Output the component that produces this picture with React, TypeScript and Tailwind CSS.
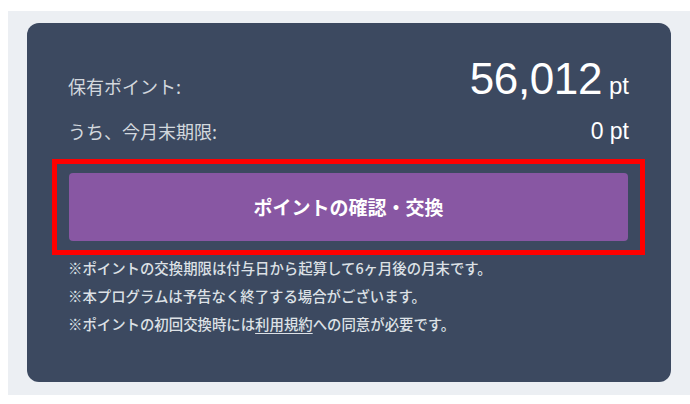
export default function App() {
  const notes = [
    "※ポイントの交換期限は付与日から起算して6ヶ月後の月末です。",
    "※本プログラムは予告なく終了する場合がございます。",
  ];

  return (
    <div className="w-[690px] h-[404px] bg-white pt-[11px] pl-[8px] font-['Noto_Sans_CJK_JP',sans-serif]">
      <div className="w-[682px] h-[384px] bg-[#eceff3] pt-[12px] pl-[19px]">
        <div className="w-[644px] h-[359px] rounded-[12px] bg-[#3c4960] pl-[41px] pr-[42px] pt-[32px]">
          {/* Points */}
          <div className="flex items-baseline justify-between">
            <span className="text-[18px] text-[#d3d8de]">保有ポイント:</span>
            <span className="font-['Liberation_Sans',sans-serif] text-white">
              <span className="text-[44px] leading-[48px] tracking-[-0.4px]">56,012</span>
              <span className="ml-[7px] text-[24px]">pt</span>
            </span>
          </div>
          <div className="mt-[14px] flex items-baseline justify-between">
            <span className="text-[18px] text-[#d3d8de]">うち、今月末期限:</span>
            <span className="font-['Liberation_Sans',sans-serif] text-[23px] leading-[27px] text-white">0 pt</span>
          </div>

          {/* Action */}
          <div className="mt-[14px] -ml-[16px] -mr-[16px] border-[5px] border-[#ff0000] px-[12px] py-[9px]">
            <button className="flex h-[68px] w-full items-center justify-center rounded-[4px] bg-[#8857a3] text-[19px] font-bold text-white">
              ポイントの確認・交換
            </button>
          </div>

          {/* Notes */}
          <div className="-mt-[1px] text-[14.4px] leading-[28px] font-medium text-[#dde1e6]">
            {notes.map((n) => (
              <p key={n}>{n}</p>
            ))}
            <p>
              ※ポイントの初回交換時には<span className="underline underline-offset-[3px]">利用規約</span>への同意が必要です。
            </p>
          </div>
        </div>
      </div>
    </div>
  );
}
